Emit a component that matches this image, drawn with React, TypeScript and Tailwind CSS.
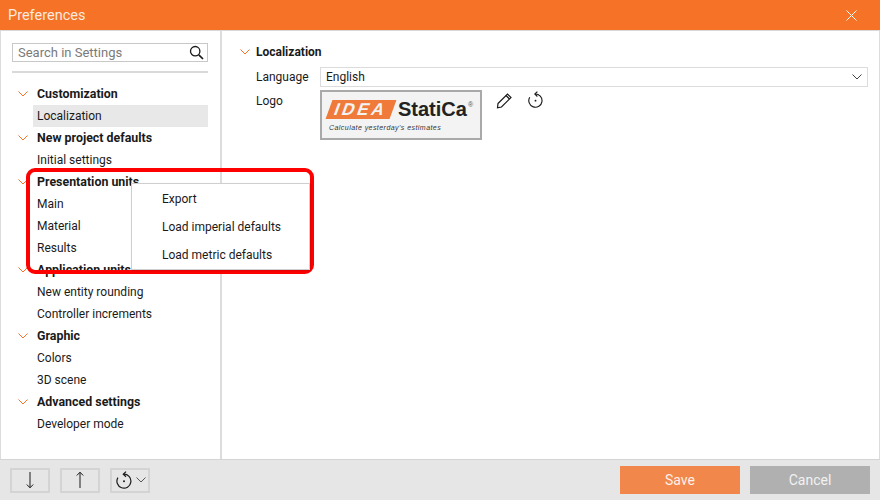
const tree = [
  { title: "Customization", items: ["Localization"] },
  { title: "New project defaults", items: ["Initial settings"] },
  { title: "Presentation units", items: ["Main", "Material", "Results"] },
  { title: "Application units", items: ["New entity rounding", "Controller increments"] },
  { title: "Graphic", items: ["Colors", "3D scene"] },
  { title: "Advanced settings", items: ["Developer mode"] },
]

function Chevron({ className = "" }: { className?: string }) {
  return (
    <svg width="10" height="6" viewBox="0 0 10 6" fill="none" stroke="currentColor" className={className}>
      <path d="M0.5 0.5L5 5L9.5 0.5" />
    </svg>
  )
}

function ResetIcon({ size = 18 }: { size?: number }) {
  return (
    <svg width={size} height={size} viewBox="0 0 18 18" fill="none" stroke="#1a1a1a" strokeWidth="1.2">
      <path d="M8.5 3.2A7 7 0 1 1 2.9 6.6" />
      <path d="M11 0.6L8.3 3.2L11 5.8" />
      <circle cx="9" cy="10.2" r="1" fill="#1a1a1a" stroke="none" />
    </svg>
  )
}

function FooterButton({ children, className = "" }: { children: React.ReactNode; className?: string }) {
  return (
    <button className={`flex h-[25px] w-10 items-center justify-center border-2 border-[#d4d4d4] ${className}`}>
      {children}
    </button>
  )
}

function Logo() {
  return (
    <div className="flex h-[50px] w-[162px] flex-col border-[2px] border-[#a9a9a9] bg-[#f3f3f3] pl-[7px] pt-[7px]">
      <div className="flex items-center">
        <span className="flex h-[19px] w-[64px] -skew-x-[20deg] items-center justify-center bg-[#f07a3a] text-[17px] font-bold leading-none tracking-[3px] text-[#f3f3f3] [font-family:'Liberation_Sans',sans-serif]">
          IDEA
        </span>
        <span className="ml-[5px] text-[20px] font-bold leading-none text-[#222] [font-family:'Liberation_Sans',sans-serif]">
          StatiCa
        </span>
        <span className="mb-[10px] ml-[1px] text-[7px] leading-none text-[#555] [font-family:'Liberation_Sans',sans-serif]">®</span>
      </div>
      <div className="mt-[5px] text-[7px] italic leading-none tracking-[0.45px] text-[#333] [font-family:'Liberation_Sans',sans-serif]">
        Calculate yesterday's estimates
      </div>
    </div>
  )
}

export default function App() {
  return (
    <div className="relative flex h-[500px] w-[880px] flex-col overflow-hidden bg-white text-[12px] text-[#1a1a1a] [font-family:'Roboto',sans-serif]">
      <header className="flex h-[31px] shrink-0 items-center justify-between border-b border-[#d9d9d9] bg-[#f57227] pl-2 pr-[23px] pt-px text-[14.5px] text-[#fbeadf]">
        <span>Preferences</span>
        <svg width="11" height="11" viewBox="0 0 11 11" stroke="#fff" strokeWidth="1">
          <path d="M0.5 0.5L10.5 10.5M10.5 0.5L0.5 10.5" />
        </svg>
      </header>

      <div className="flex min-h-0 flex-1 border-x border-[#dcdcdc]">
        <aside className="w-[221px] shrink-0 border-r-2 border-[#dcdcdc] pl-[11px] pr-[12px] pt-[12px]">
          <div className="flex h-[19px] items-center justify-between border border-[#c8c8c8] pl-[5px] pr-[3px] text-[13px] text-[#7a7a7a]">
            <span>Search in Settings</span>
            <svg width="15" height="15" viewBox="0 0 15 15" fill="none" stroke="#1a1a1a" strokeWidth="1.3">
              <circle cx="6.2" cy="6.2" r="4.7" />
              <path d="M9.8 9.8L14 14" strokeWidth="1.7" />
            </svg>
          </div>
          <div className="mt-[9px] h-[2px] bg-[#d9d9d9]" />
          <div className="mt-[10px]">
            {tree.map((group) => (
              <div key={group.title}>
                <div className="flex h-[22px] items-center">
                  <Chevron className="ml-[6px] text-[#f57227]" />
                  <span className="ml-[9px] text-[12.4px] font-bold">{group.title}</span>
                </div>
                {group.items.map((item) => (
                  <div
                    key={item}
                    className={`ml-[21px] flex h-[22px] items-center pl-[4px] ${item === "Localization" ? "bg-[#e8e8e8]" : ""}`}
                  >
                    {item}
                  </div>
                ))}
              </div>
            ))}
          </div>
        </aside>

        <main className="min-w-0 flex-1 pl-[18px] pr-[11px] pt-[11px]">
          <div className="flex h-[20px] items-center">
            <Chevron className="text-[#f57227]" />
            <span className="ml-[6px] font-bold">Localization</span>
          </div>
          <div className="mt-[5px] flex h-[20px] items-center pl-[16px]">
            <span className="w-[64px] shrink-0">Language</span>
            <div className="flex h-[20px] flex-1 items-center justify-between border border-[#dcdcdc] pl-[5px] pr-[5px]">
              <span>English</span>
              <Chevron className="text-[#444]" />
            </div>
          </div>
          <div className="mt-[3px] flex pl-[16px]">
            <span className="w-[64px] shrink-0 pt-[2px]">Logo</span>
            <Logo />
            <div className="ml-[14px] mt-[1px] flex items-start gap-[13px]">
              <svg width="18" height="18" viewBox="0 0 18 18" fill="none" stroke="#1a1a1a" strokeWidth="1.2">
                <path d="M2 12.5L11.5 3L15 6.5L5.5 16L1.5 16.8Z" />
                <path d="M10 4.5L13.5 8" />
              </svg>
              <ResetIcon size={17} />
            </div>
          </div>
        </main>
      </div>

      <footer className="flex h-[41px] shrink-0 items-center border-t border-[#d4d4d4] bg-[#e6e6e6] pl-[10px] pr-[10px]">
        <div className="flex gap-[10px]">
          <FooterButton>
            <svg width="10" height="18" viewBox="0 0 10 18" fill="none" stroke="#1a1a1a">
              <path d="M5 1V16.5M1.8 13.5L5 16.8L8.2 13.5" />
            </svg>
          </FooterButton>
          <FooterButton>
            <svg width="10" height="18" viewBox="0 0 10 18" fill="none" stroke="#1a1a1a">
              <path d="M5 17V1.5M1.8 4.5L5 1.2L8.2 4.5" />
            </svg>
          </FooterButton>
          <FooterButton className="gap-[3px]">
            <ResetIcon />
            <Chevron className="text-[#555]" />
          </FooterButton>
        </div>
        <div className="ml-auto flex gap-[10px]">
          <button className="h-[28px] w-[120px] bg-[#f2874b] text-[14px] text-[#fdf1e9]">Save</button>
          <button className="h-[28px] w-[120px] bg-[#b0b0b0] text-[14px] text-[#f2f2f2]">Cancel</button>
        </div>
      </footer>

      <div className="absolute left-[26px] top-[168px] h-[106px] w-[288px] rounded-[9px] border-[4px] border-[#ff0000]" />
      <div className="absolute left-[131px] top-[183px] h-[87px] w-[179px] border border-[#cfcfcf] bg-white pl-[30px] pt-[1px] shadow-[1px_1px_2px_rgba(0,0,0,0.15)]">
        <div className="flex h-[28px] items-center">Export</div>
        <div className="flex h-[28px] items-center">Load imperial defaults</div>
        <div className="flex h-[28px] items-center">Load metric defaults</div>
      </div>
    </div>
  )
}
